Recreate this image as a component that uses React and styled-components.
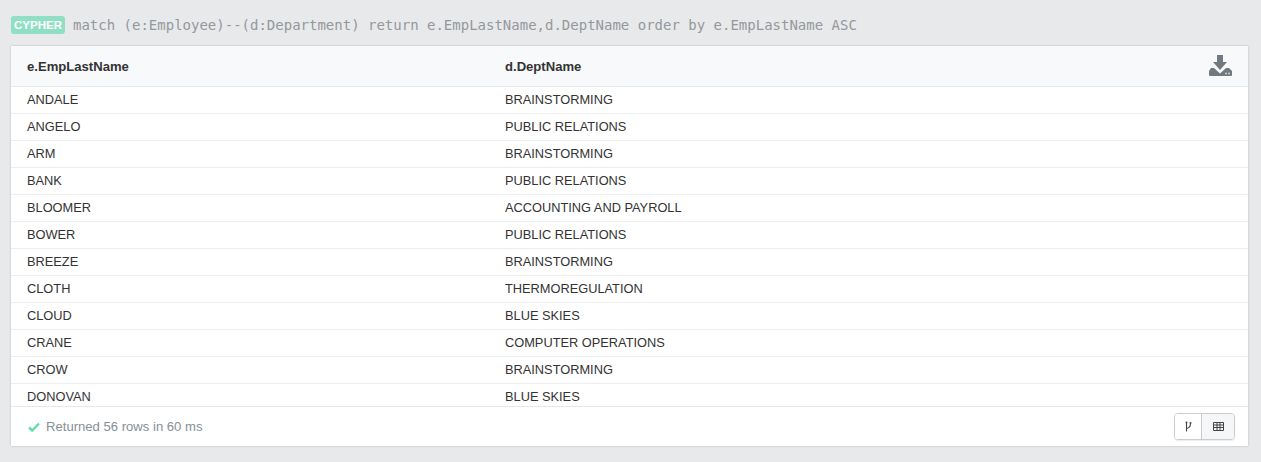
import React from "react";
import styled, { createGlobalStyle } from "styled-components";

const rows = [
  ["ANDALE", "BRAINSTORMING"],
  ["ANGELO", "PUBLIC RELATIONS"],
  ["ARM", "BRAINSTORMING"],
  ["BANK", "PUBLIC RELATIONS"],
  ["BLOOMER", "ACCOUNTING AND PAYROLL"],
  ["BOWER", "PUBLIC RELATIONS"],
  ["BREEZE", "BRAINSTORMING"],
  ["CLOTH", "THERMOREGULATION"],
  ["CLOUD", "BLUE SKIES"],
  ["CRANE", "COMPUTER OPERATIONS"],
  ["CROW", "BRAINSTORMING"],
  ["DONOVAN", "BLUE SKIES"],
];

const Global = createGlobalStyle`
  html, body { margin: 0; height: 100%; background: #e8e9eb; }
  body { font-family: "Liberation Sans", Arial, sans-serif; overflow: hidden; }
`;

const Page = styled.div`
  width: 1261px;
  height: 462px;
  padding: 14px 13px 16px 11px;
  box-sizing: border-box;
  display: flex;
  flex-direction: column;
`;

const QueryBar = styled.div`
  height: 22px;
  display: flex;
  align-items: center;
  gap: 8px;
  margin-bottom: 10px;
`;

const Badge = styled.span`
  background: #90dfc5;
  color: #fff;
  font-size: 11.5px;
  font-weight: 700;
  line-height: 18px;
  height: 18px;
  width: 54px;
  text-align: center;
  border-radius: 3px;
  flex: none;
`;

const Query = styled.code`
  font-family: "DejaVu Sans Mono", monospace;
  font-size: 14px;
  color: #94989c;
  white-space: pre;
`;

const Panel = styled.div`
  flex: 1;
  min-height: 0;
  display: flex;
  flex-direction: column;
  background: #fff;
  box-shadow: 0 0 2px rgba(0, 0, 0, 0.22);
`;

const Row = styled.div`
  display: grid;
  grid-template-columns: 478px 1fr;
  padding-left: 16px;
  align-items: center;
  flex: none;
  color: #333;
`;

const HeadRow = styled(Row)`
  position: relative;
  height: 40px;
  background: #f8f9fb;
  border-bottom: 1px solid #e6e8ea;
  font-size: 13.1px;
  font-weight: 700;
`;

const BodyRow = styled(Row)`
  height: 24px;
  padding-bottom: 2px;
  border-bottom: 1px solid #eceeef;
  font-size: 12.8px;
`;

const Rows = styled.div`
  height: 319px;
  overflow: hidden;
  flex: none;
`;

const Download = styled.svg`
  position: absolute;
  right: 16px;
  top: 9px;
  width: 23px;
  height: 22px;
  fill: #727a80;
`;

const Footer = styled.div`
  flex: 1;
  display: flex;
  align-items: center;
  justify-content: space-between;
  padding: 0 13px 0 17px;
  border-top: 1px solid #e6e8ea;
`;

const Status = styled.div`
  display: flex;
  align-items: center;
  gap: 6px;
  font-size: 13.1px;
  color: #868f96;
`;

const Toggle = styled.div`
  display: flex;
  height: 25px;
  border: 1px solid #c9ccce;
  border-radius: 4px;
  overflow: hidden;
  box-shadow: 0 1px 1px rgba(0, 0, 0, 0.08);
`;

const ToggleButton = styled.div`
  width: ${(p) => p.$w}px;
  display: flex;
  align-items: center;
  justify-content: center;
  background: ${(p) => (p.$active ? "#f5f6f7" : "#fff")};
  border-left: ${(p) => (p.$active ? "1px solid #c9ccce" : "0")};
`;

export default function App() {
  return (
    <>
      <Global />
      <Page>
        <QueryBar>
          <Badge>CYPHER</Badge>
          <Query>match (e:Employee)--(d:Department) return e.EmpLastName,d.DeptName order by e.EmpLastName ASC</Query>
        </QueryBar>
        <Panel>
          <HeadRow>
            <div>e.EmpLastName</div>
            <div>d.DeptName</div>
            <Download viewBox="0 0 23 22">
              <path d="M8 0h6v7h4l-7 8-7-8h4z" />
              <path d="M0 16l2-3h3l6 5.500 6-5.500h3l3 3v4a1 1 0 0 1-1 1H1a1 1 0 0 1-1-1z" />
              <circle cx="17" cy="18.500" r=".9" fill="#d8dbdd" />
              <circle cx="20" cy="18.500" r=".9" fill="#d8dbdd" />
            </Download>
          </HeadRow>
          <Rows>
            {rows.map(([name, dept]) => (
              <BodyRow key={name}>
                <div>{name}</div>
                <div>{dept}</div>
              </BodyRow>
            ))}
          </Rows>
          <Footer>
            <Status>
              <svg width="12" height="10" viewBox="0 0 12 10">
                <path d="M1 5.500l3.200 3L11 1.500" fill="none" stroke="#5fdfa8" strokeWidth="2.400" />
              </svg>
              Returned 56 rows in 60 ms
            </Status>
            <Toggle>
              <ToggleButton $w={26}>
                <svg width="9" height="12" viewBox="0 0 9 12">
                  <path d="M2.500 1.500v9M2.500 7.500c2.500-.5 4-2 4-5" fill="none" stroke="#444" strokeWidth="1.100" />
                  <circle cx="2.500" cy="1.500" r="1" fill="#444" />
                  <circle cx="6.500" cy="2" r="1" fill="#444" />
                </svg>
              </ToggleButton>
              <ToggleButton $w={32} $active>
                <svg width="11" height="9" viewBox="0 0 11 9">
                  <path d="M.5.500h10v8H.5zM.5 3h10M.5 5.500h10M4 .500v8M7 .500v8" fill="none" stroke="#444" strokeWidth="1" />
                </svg>
              </ToggleButton>
            </Toggle>
          </Footer>
        </Panel>
      </Page>
    </>
  );
}
